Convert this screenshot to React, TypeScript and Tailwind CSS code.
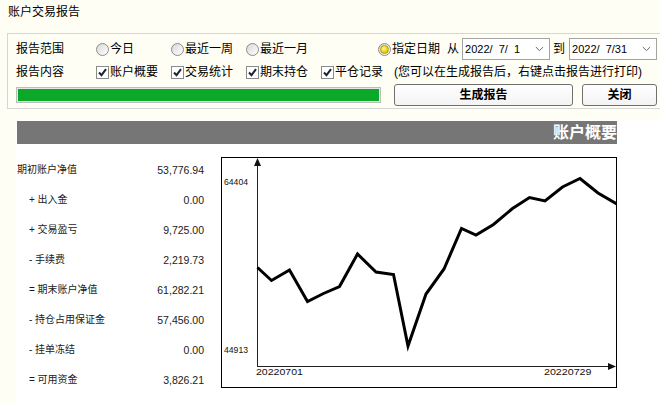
import React from "react";

function Radio({ checked = false }: { checked?: boolean }) {
  return (
    <span className="w-[13px] h-[13px] rounded-full border border-[#8a8b8c] bg-[linear-gradient(135deg,#d8d8d8,#ffffff)] flex items-center justify-center shrink-0">
      {checked && (
        <span className="w-[9px] h-[9px] rounded-full border border-[#b59c00] bg-[radial-gradient(circle_at_40%_35%,#fff7a8,#f0d000_60%,#c8a800)]" />
      )}
    </span>
  );
}

function Check() {
  return (
    <span className="w-[13px] h-[13px] border border-[#8a8b8c] bg-white flex items-center justify-center shrink-0">
      <svg width="11" height="11" viewBox="0 0 11 11">
        <path d="M2 5.5 L4.5 8.2 L9 2.2" fill="none" stroke="#1c2430" strokeWidth="2" />
      </svg>
    </span>
  );
}

function RadioItem({ label, w, checked }: { label: string; w: string; checked?: boolean }) {
  return (
    <span className={`flex items-center gap-[1px] ${w}`}>
      <Radio checked={checked} />
      <span>{label}</span>
    </span>
  );
}

function CheckItem({ label, w }: { label: string; w: string }) {
  return (
    <span className={`flex items-center gap-[1px] ${w}`}>
      <Check />
      <span>{label}</span>
    </span>
  );
}

function DateBox({ value }: { value: string }) {
  return (
    <span className="w-[88px] h-[22px] border border-[#a3a3a3] bg-white flex items-center justify-between pl-[2px] pr-[5px] text-[11px] [font-family:'Liberation_Sans',sans-serif] whitespace-pre">
      <span>{value}</span>
      <svg width="9" height="6" viewBox="0 0 9 6">
        <path d="M0.8 1 L4.5 4.6 L8.2 1" fill="none" stroke="#6a6a6a" strokeWidth="1" />
      </svg>
    </span>
  );
}

const rows: { label: string; value: string; indent: boolean }[] = [
  { label: "期初账户净值", value: "53,776.94", indent: false },
  { label: "+ 出入金", value: "0.00", indent: true },
  { label: "+ 交易盈亏", value: "9,725.00", indent: true },
  { label: "- 手续费", value: "2,219.73", indent: true },
  { label: "= 期末账户净值", value: "61,282.21", indent: true },
  { label: "- 持仓占用保证金", value: "57,456.00", indent: true },
  { label: "- 挂单冻结", value: "0.00", indent: true },
  { label: "= 可用资金", value: "3,826.21", indent: true },
];

const pts: [number, number][] = [
  [257.5, 267.5],
  [271.5, 280.5],
  [289.5, 270],
  [307.5, 301.5],
  [323.5, 293.5],
  [339.5, 286.5],
  [357.5, 254],
  [376, 272],
  [393.5, 274.5],
  [408, 346],
  [426, 294],
  [444, 269],
  [461.5, 228.5],
  [476, 235],
  [493.5, 224.5],
  [512.5, 208.5],
  [529.5, 197.5],
  [545, 201],
  [562.5, 187],
  [580, 178.5],
  [598, 193],
  [617, 204],
];

function Chart() {
  return (
    <div className="ml-[17px] mt-[2px] w-[396px] h-[231px] border border-black overflow-hidden shrink-0">
      <svg width="394" height="229" viewBox="222 158 394 229" className="block">
        <line x1="257.5" y1="162" x2="257.5" y2="367" stroke="#222" strokeWidth="1" />
        <polygon points="257.5,158 254,166 261,166" fill="#111" />
        <line x1="257" y1="366.5" x2="611" y2="366.5" stroke="#222" strokeWidth="1" />
        <polygon points="616,366.5 608,363 608,370" fill="#111" />
        <polyline
          points={pts.map((p) => p.join(",")).join(" ")}
          fill="none"
          stroke="#000"
          strokeWidth="3"
          strokeLinejoin="miter"
        />
        <g fontFamily="'Liberation Sans', Arial, sans-serif" fontSize="9.5" fill="#111">
          <text x="224" y="184.5" textLength="24" lengthAdjust="spacingAndGlyphs">64404</text>
          <text x="224" y="353" textLength="24" lengthAdjust="spacingAndGlyphs">44913</text>
          <text x="256" y="374.5" textLength="47" lengthAdjust="spacingAndGlyphs">20220701</text>
          <text x="544" y="374.5" textLength="47.5" lengthAdjust="spacingAndGlyphs">20220729</text>
        </g>
      </svg>
    </div>
  );
}

export default function App() {
  return (
    <div className="w-[660px] h-[404px] overflow-hidden bg-[#fffef4] text-black [font-family:'Liberation_Sans','Noto_Sans_CJK_SC',sans-serif]">
      <div className="h-[33px] pl-[8px] pt-[4px] text-[12px] leading-[16px]">账户交易报告</div>

      <div className="ml-[7px] w-[680px] h-[76px] border border-[#d6d6d6] pt-[4px] pl-[8px] text-[12px] leading-[16px]">
        <div className="flex items-center h-[22px]">
          <span className="w-[80px]">报告范围</span>
          <RadioItem label="今日" w="w-[75px]" />
          <RadioItem label="最近一周" w="w-[75px]" />
          <RadioItem label="最近一月" w="w-[132px]" />
          <RadioItem label="指定日期" w="" checked />
          <span className="ml-[7px]">从</span>
          <span className="ml-[3px]"><DateBox value="2022/  7/  1" /></span>
          <span className="ml-[3px]">到</span>
          <span className="ml-[4px]"><DateBox value="2022/  7/31" /></span>
        </div>
        <div className="flex items-center h-[24px]">
          <span className="w-[80px]">报告内容</span>
          <CheckItem label="账户概要" w="w-[75px]" />
          <CheckItem label="交易统计" w="w-[75px]" />
          <CheckItem label="期末持仓" w="w-[75px]" />
          <CheckItem label="平仓记录" w="" />
          <span className="ml-[11px]">(您可以在生成报告后，右键点击报告进行打印)</span>
        </div>
        <div className="flex items-center h-[22px]">
          <div className="w-[365px] h-[16px] border border-[#bcbcbc] bg-[#e6e6e6] p-[1px]">
            <div className="w-full h-full bg-[#0aaa28]" />
          </div>
          <button className="ml-[13px] w-[179px] h-[22px] border border-[#707070] rounded-[3px] bg-[linear-gradient(#ffffff,#f3f3f3)] font-bold text-[12px]">
            生成报告
          </button>
          <button className="ml-[9px] w-[75px] h-[22px] border border-[#707070] rounded-[3px] bg-[linear-gradient(#ffffff,#f3f3f3)] font-bold text-[12px]">
            关闭
          </button>
        </div>
      </div>

      <div className="ml-[16px] mt-[11px] h-[284px] bg-white pt-[1px] pl-[1px]">
        <div className="w-[600px] h-[23px] bg-[#767676] flex items-center justify-end text-white font-bold text-[16px] leading-none">
          账户概要
        </div>
        <div className="flex mt-[11px]">
          <div className="w-[187px] flex flex-col shrink-0 text-[#1a1a1a]">
            {rows.map((r) => (
              <div key={r.label} className="h-[30px] flex items-center justify-between">
                <span className={`text-[10px] leading-none ${r.indent ? "pl-[12px]" : ""}`}>{r.label}</span>
                <span className="text-[10.5px] leading-none">{r.value}</span>
              </div>
            ))}
          </div>
          <Chart />
        </div>
      </div>
    </div>
  );
}
